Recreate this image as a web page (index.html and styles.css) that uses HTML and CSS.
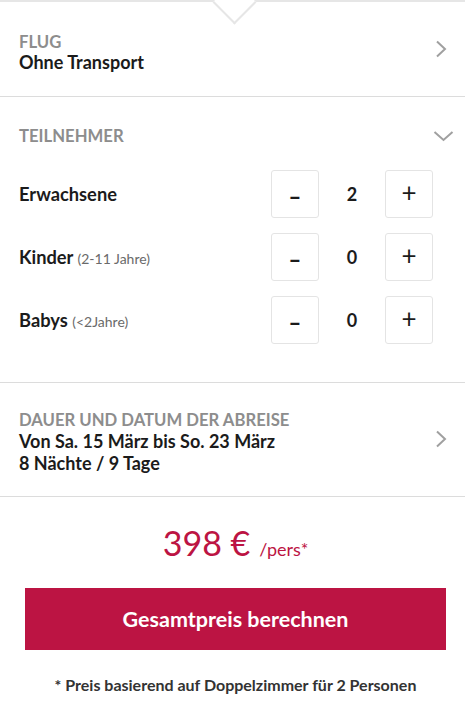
FILE: index.html
```html
<!DOCTYPE html>
<html lang="de">
<head>
    <meta charset="UTF-8">
    <meta name="viewport" content="width=device-width, initial-scale=1.0">
    <title>Reise buchen</title>
    <link rel="stylesheet" href="styles.css">
</head>
<body>
    <div class="panel">
        <span class="pointer"></span>

        <div class="section row-link">
            <div class="info">
                <h4>FLUG</h4>
                <p class="value">Ohne Transport</p>
            </div>
            <svg class="chevron" width="12" height="18" viewBox="0 0 12 18"><polyline points="2,1.5 10,9 2,16.5" fill="none" stroke="#a0a0a0" stroke-width="2"/></svg>
        </div>

        <div class="section participants">
            <div class="section-head">
                <h4>TEILNEHMER</h4>
                <svg class="chevron-down" width="21" height="12" viewBox="0 0 21 12"><polyline points="1.5,2 10.5,10 19.5,2" fill="none" stroke="#a0a0a0" stroke-width="2"/></svg>
            </div>
            <div class="counter">
                <div class="label">Erwachsene</div>
                <div class="stepper">
                    <button class="minus">–</button>
                    <span class="count">2</span>
                    <button class="plus">+</button>
                </div>
            </div>
            <div class="counter">
                <div class="label">Kinder <small>(2-11 Jahre)</small></div>
                <div class="stepper">
                    <button class="minus">–</button>
                    <span class="count">0</span>
                    <button class="plus">+</button>
                </div>
            </div>
            <div class="counter">
                <div class="label">Babys <small>(&lt;2Jahre)</small></div>
                <div class="stepper">
                    <button class="minus">–</button>
                    <span class="count">0</span>
                    <button class="plus">+</button>
                </div>
            </div>
        </div>

        <div class="section row-link dates">
            <div class="info">
                <h4>DAUER UND DATUM DER ABREISE</h4>
                <p class="value">Von Sa. 15 März bis So. 23 März</p>
                <p class="value">8 Nächte / 9 Tage</p>
            </div>
            <svg class="chevron" width="12" height="18" viewBox="0 0 12 18"><polyline points="2,1.5 10,9 2,16.5" fill="none" stroke="#a0a0a0" stroke-width="2"/></svg>
        </div>

        <div class="summary">
            <div class="price">398 €<span>/pers*</span></div>
            <button class="calc">Gesamtpreis berechnen</button>
            <p class="note">* Preis basierend auf Doppelzimmer für 2 Personen</p>
        </div>
    </div>
</body>
</html>
```
FILE: styles.css
```css
body {
    margin: 0;
    font-family: 'Lato', sans-serif;
    color: #1b1b1b;
    background-color: #fff;
}
.panel {
    position: relative;
    border-top: 2px solid #e6e6e6;
}
.pointer {
    position: absolute;
    top: -15px;
    left: 219px;
    width: 31px;
    height: 31px;
    background-color: #fff;
    border-right: 2px solid #e6e6e6;
    border-bottom: 2px solid #e6e6e6;
    box-sizing: border-box;
    transform: rotate(45deg);
}
.section {
    border-bottom: 1px solid #dcdcdc;
    padding: 0 18px 0 19px;
}
h4 {
    margin: 0;
    font-size: 16.7px;
    line-height: 20px;
    font-weight: bold;
    color: #8d8d8d;
}
.value {
    margin: 0;
    font-size: 18px;
    line-height: 21px;
    font-weight: bold;
}
.row-link {
    display: flex;
    align-items: center;
    justify-content: space-between;
    height: 94px;
}
.row-link .info {
    padding-top: 6px;
}
.participants {
    padding-top: 29px;
    padding-bottom: 38px;
}
.section-head {
    display: flex;
    justify-content: space-between;
    align-items: center;
    margin-bottom: 24px;
}
.chevron-down {
    margin-right: -7px;
}
.counter {
    display: flex;
    align-items: center;
    justify-content: space-between;
    margin-top: 15px;
}
.section-head + .counter {
    margin-top: 0;
}
.label {
    font-size: 18.3px;
    font-weight: bold;
}
.label small {
    font-size: 14px;
    font-weight: normal;
    color: #6a6a6a;
}
.stepper {
    display: flex;
    align-items: center;
    margin-right: 14px;
}
.stepper button {
    width: 48px;
    height: 48px;
    padding: 0;
    border: 1px solid #e4e4e4;
    border-radius: 3px;
    background-color: #fff;
    color: #1b1b1b;
    font-family: 'Lato', sans-serif;
    cursor: pointer;
}
.stepper .minus {
    font-size: 22px;
    font-weight: 900;
    padding-top: 4px;
}
.stepper .plus {
    font-size: 26px;
    padding-bottom: 4px;
}
.count {
    width: 66px;
    text-align: center;
    font-size: 18px;
    font-weight: bold;
}
.dates {
    height: 113px;
}
.dates .info {
    padding-top: 4px;
}
.dates .value {
    line-height: 22px;
}
.dates .chevron {
    margin-top: -2px;
}
.summary {
    display: flex;
    flex-direction: column;
    align-items: center;
    padding: 26px 19px 0 25px;
}
.price {
    font-size: 34px;
    line-height: 40px;
    color: #bc1443;
}
.price span {
    margin-left: 9px;
    font-size: 18px;
}
.calc {
    margin-top: 19px;
    width: 100%;
    height: 62px;
    border: none;
    background-color: #bc1443;
    color: #fff;
    font-family: 'Lato', sans-serif;
    font-size: 21.5px;
    font-weight: bold;
    cursor: pointer;
}
.note {
    margin: 25px 0 0;
    font-size: 16px;
    font-weight: bold;
    color: #333;
}
```
